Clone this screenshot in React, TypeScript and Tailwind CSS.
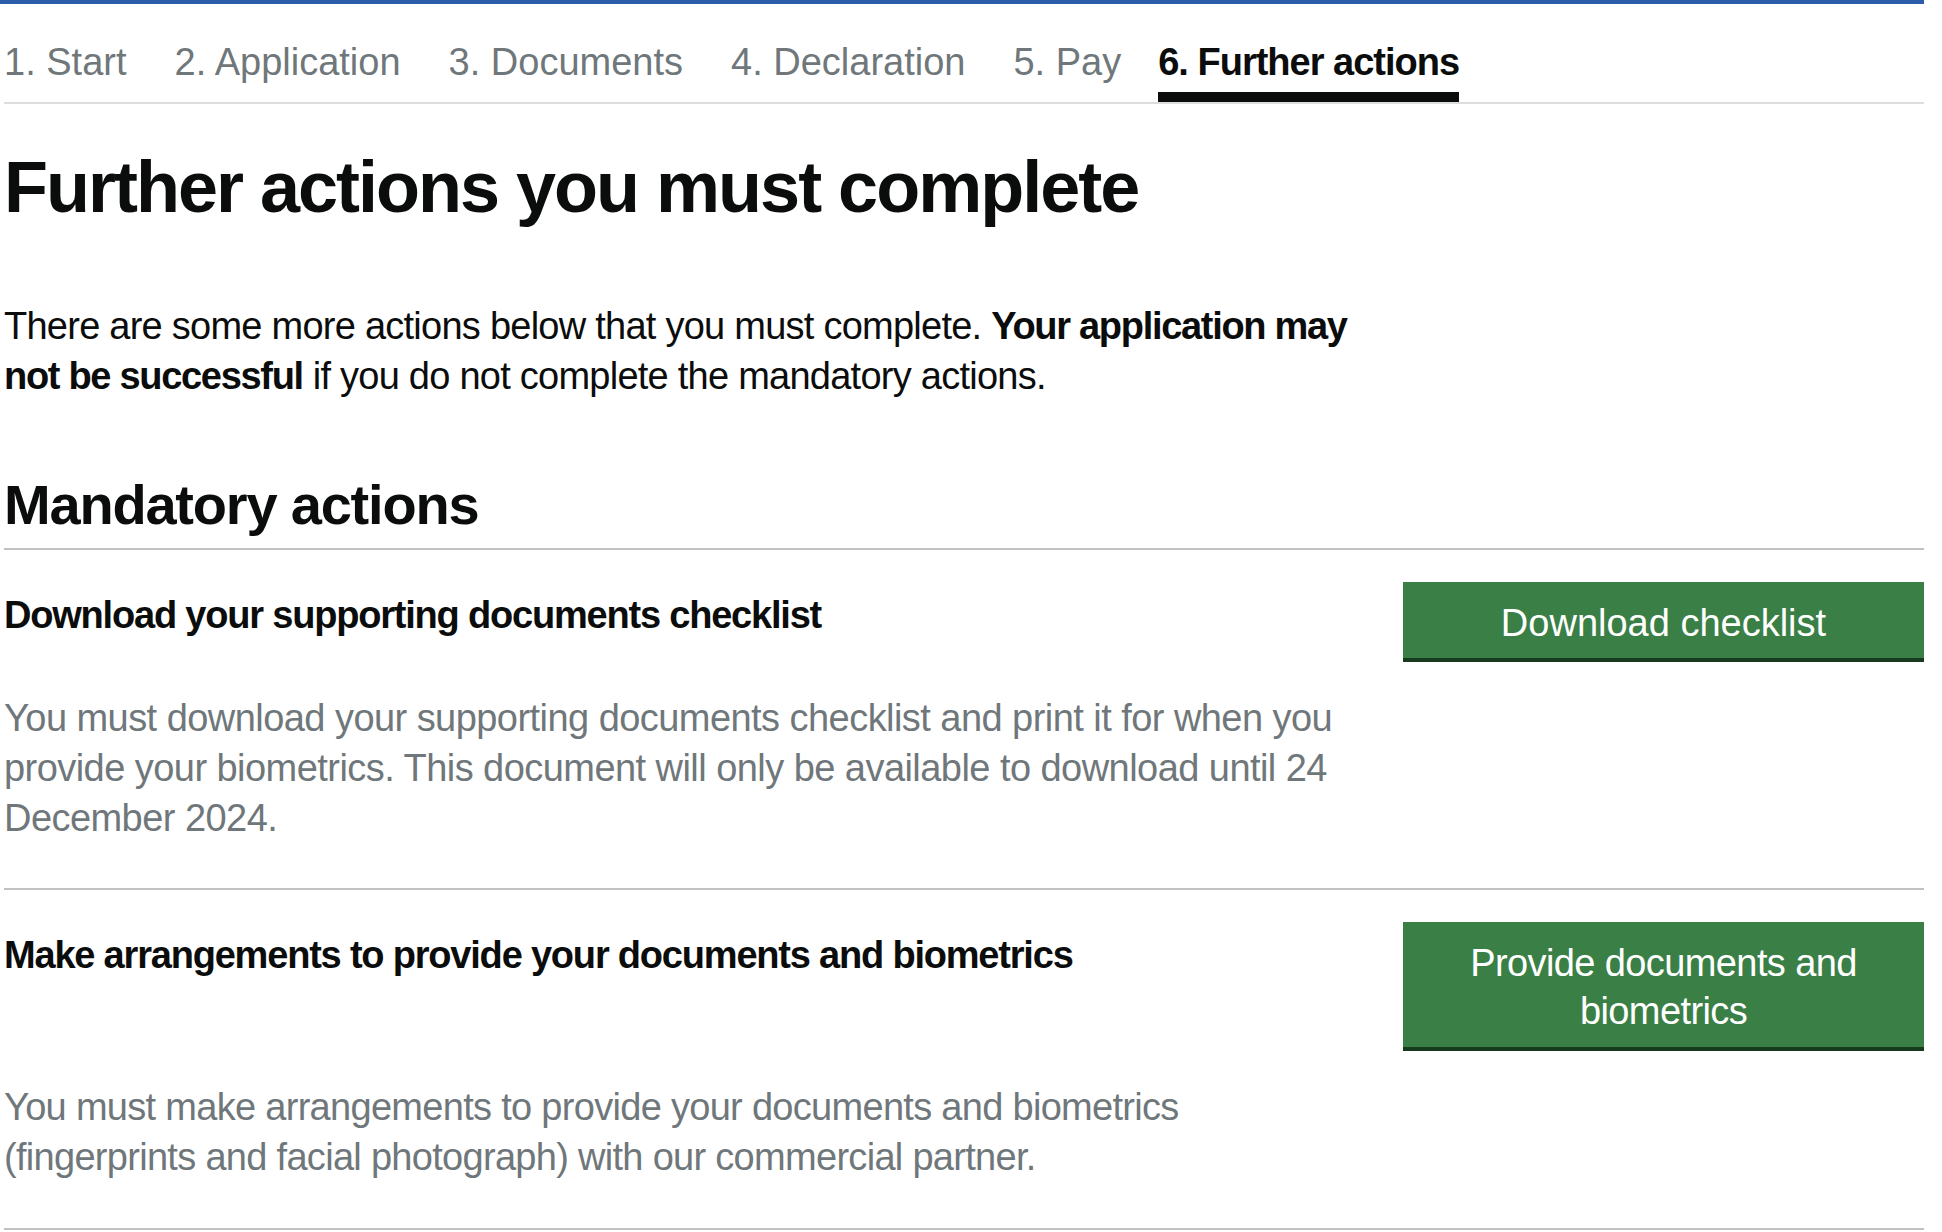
import React from "react";

const tabs = ["1. Start", "2. Application", "3. Documents", "4. Declaration", "5. Pay"];

export default function App() {
  return (
    <div className="min-h-screen bg-white font-['Liberation_Sans',Arial,sans-serif] text-[#0b0c0c]">
      <div className="w-[1924px] border-t-4 border-[#2a5ca8]">
        <div className="ml-[4px] w-[1920px]">
          <nav className="flex gap-[48px] border-b-2 border-[#dddddd] pt-[33px]">
            {tabs.map((t) => (
              <div
                key={t}
                className="border-b-[10px] border-transparent pb-[5px] text-[38px] leading-[50px] text-[#6f777b]"
              >
                {t}
              </div>
            ))}
            <div className="-ml-[11px] border-b-[10px] border-[#0b0c0c] pb-[5px] text-[38px] font-bold leading-[50px] tracking-[-1px] text-[#0b0c0c]">
              6. Further actions
            </div>
          </nav>

          <h1 className="mt-[43px] text-[72px] font-bold leading-[80px] tracking-[-2px]">
            Further actions you must complete
          </h1>

          <p className="mt-[74px] text-[38px] leading-[50px] tracking-[-0.75px]">
            There are some more actions below that you must complete.{" "}
            <strong className="font-bold tracking-[-1.3px]">Your application may</strong>
            <br />
            <strong className="font-bold tracking-[-1.3px]">not be successful</strong> if you do not complete the
            mandatory actions.
          </p>

          <h2 className="mt-[72px] border-b-2 border-[#bfc1c3] pb-[11px] text-[56px] font-bold leading-[64px] tracking-[-1.2px]">
            Mandatory actions
          </h2>

          <section className="border-b-2 border-[#bfc1c3] pt-[32px] pb-[45px]">
            <div className="flex items-start justify-between">
              <h3 className="mt-[8px] text-[38px] font-bold leading-[50px] tracking-[-1.2px]">
                Download your supporting documents checklist
              </h3>
              <button className="w-[521px] border-b-4 border-[#173a1f] bg-[#3a7f46] pt-[17px] pb-[11px] text-center text-[38px] leading-[48px] text-white">
                Download checklist
              </button>
            </div>
            <p className="mt-[31px] text-[38px] leading-[50px] tracking-[-0.55px] text-[#6f777b]">
              You must download your supporting documents checklist and print it for when you
              <br />
              provide your biometrics. This document will only be available to download until 24
              <br />
              December 2024.
            </p>
          </section>

          <section className="border-b-2 border-[#bfc1c3] pt-[32px] pb-[46px]">
            <div className="flex items-start justify-between">
              <h3 className="mt-[8px] text-[38px] font-bold leading-[50px] tracking-[-1.2px]">
                Make arrangements to provide your documents and biometrics
              </h3>
              <button className="w-[521px] border-b-4 border-[#173a1f] bg-[#3a7f46] px-[40px] pt-[17px] pb-[12px] text-center text-[38px] leading-[48px] tracking-[-0.6px] text-white">
                Provide documents and
                <br />
                biometrics
              </button>
            </div>
            <p className="mt-[31px] text-[38px] leading-[50px] tracking-[-0.7px] text-[#6f777b]">
              You must make arrangements to provide your documents and biometrics
              <br />
              (fingerprints and facial photograph) with our commercial partner.
            </p>
          </section>
        </div>
      </div>
    </div>
  );
}
